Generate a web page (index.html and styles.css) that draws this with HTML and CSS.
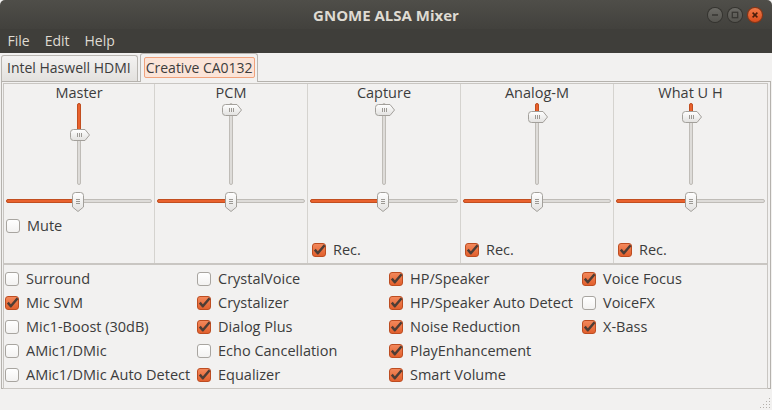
FILE: index.html
```html
<!DOCTYPE html>
<html lang="en">
  <head>
    <meta charset="UTF-8">
    <title>GNOME ALSA Mixer</title>
    <link rel="stylesheet" href="styles.css">
  </head>
  <body>
    <svg class="defs" width="0" height="0" aria-hidden="true">
      <defs>
        <linearGradient id="knobFill" x1="0" y1="0" x2="0" y2="1">
          <stop offset="0" stop-color="#ffffff"/>
          <stop offset="1" stop-color="#e2e1df"/>
        </linearGradient>
        <symbol id="vknob" viewBox="0 0 20 12">
          <path d="M3.5 0.5H15L19.5 6L15 11.5H3.5A3 3 0 0 1 0.5 8.5V3.5A3 3 0 0 1 3.5 0.5Z" fill="url(#knobFill)" stroke="#a3a09b"/>
          <path d="M7.5 4v4M9.5 4v4M11.5 4v4" stroke="#9c9994" stroke-width="1"/>
        </symbol>
        <symbol id="hknob" viewBox="0 0 12 20">
          <path d="M0.5 3.5A3 3 0 0 1 3.5 0.5H8.5A3 3 0 0 1 11.5 3.5V15L6 19.5L0.5 15Z" fill="url(#knobFill)" stroke="#a3a09b"/>
          <path d="M4 7.5h4M4 9.5h4M4 11.5h4" stroke="#9c9994" stroke-width="1"/>
        </symbol>
        <symbol id="tick" viewBox="0 0 14 14">
          <path d="M2.8 6.6L5.8 10.2L12.6 2.2" fill="none" stroke="#4e3d35" stroke-width="2.5" stroke-linejoin="round"/>
        </symbol>
      </defs>
    </svg>

    <div class="titlebar">
      <span></span>
      <span class="title">GNOME ALSA Mixer</span>
      <div class="wbtns">
        <span class="wbtn"><svg width="14" height="14" viewBox="0 0 14 14"><path d="M4 7h6" stroke="#393834" stroke-width="1.6"/></svg></span>
        <span class="wbtn"><svg width="14" height="14" viewBox="0 0 14 14"><rect x="4.3" y="4.3" width="5.4" height="5.4" fill="none" stroke="#393834" stroke-width="1.3"/></svg></span>
        <span class="wbtn wbtn-close"><svg width="14" height="14" viewBox="0 0 14 14"><path d="M4.6 4.6l4.8 4.8M9.4 4.6l-4.8 4.8" stroke="#4a1d0a" stroke-width="1.5"/></svg></span>
      </div>
    </div>

    <div class="menubar">
      <span class="menu-item">File</span>
      <span class="menu-item">Edit</span>
      <span class="menu-item">Help</span>
    </div>

    <div class="tabs">
      <div class="tab">Intel Haswell HDMI</div>
      <div class="tab tab-active"><span class="tab-focus">Creative CA0132</span></div>
    </div>

    <div class="notebook">
      <div class="strips">
        <div class="strip">
          <div class="strip-name">Master</div>
          <div class="vscale"><div class="vtrough"><div class="vfill" style="height:28px"></div><svg class="vthumb" style="top:25px" width="20" height="12"><use href="#vknob"/></svg></div></div>
          <div class="hscale"><div class="htrough"><div class="hfill" style="width:49%"></div><svg class="hthumb" style="left:calc(49% - 6px)" width="12" height="20"><use href="#hknob"/></svg></div></div>
          <div class="strip-checks">
            <label class="check"><span class="cb"></span>Mute</label>
            <span></span>
          </div>
        </div>
        <div class="strip">
          <div class="strip-name">PCM</div>
          <div class="vscale"><div class="vtrough"><svg class="vthumb" style="top:0px" width="20" height="12"><use href="#vknob"/></svg></div></div>
          <div class="hscale"><div class="htrough"><div class="hfill" style="width:50%"></div><svg class="hthumb" style="left:calc(50% - 6px)" width="12" height="20"><use href="#hknob"/></svg></div></div>
          <div class="strip-checks"></div>
        </div>
        <div class="strip">
          <div class="strip-name">Capture</div>
          <div class="vscale"><div class="vtrough"><svg class="vthumb" style="top:0px" width="20" height="12"><use href="#vknob"/></svg></div></div>
          <div class="hscale"><div class="htrough"><div class="hfill" style="width:49%"></div><svg class="hthumb" style="left:calc(49% - 6px)" width="12" height="20"><use href="#hknob"/></svg></div></div>
          <div class="strip-checks">
            <span></span>
            <label class="check"><span class="cb on"><svg width="14" height="14"><use href="#tick"/></svg></span>Rec.</label>
          </div>
        </div>
        <div class="strip">
          <div class="strip-name">Analog-M</div>
          <div class="vscale"><div class="vtrough"><div class="vfill" style="height:9px"></div><svg class="vthumb" style="top:7px" width="20" height="12"><use href="#vknob"/></svg></div></div>
          <div class="hscale"><div class="htrough"><div class="hfill" style="width:50%"></div><svg class="hthumb" style="left:calc(50% - 6px)" width="12" height="20"><use href="#hknob"/></svg></div></div>
          <div class="strip-checks">
            <span></span>
            <label class="check"><span class="cb on"><svg width="14" height="14"><use href="#tick"/></svg></span>Rec.</label>
          </div>
        </div>
        <div class="strip">
          <div class="strip-name">What U H</div>
          <div class="vscale"><div class="vtrough"><div class="vfill" style="height:9px"></div><svg class="vthumb" style="top:7px" width="20" height="12"><use href="#vknob"/></svg></div></div>
          <div class="hscale"><div class="htrough"><div class="hfill" style="width:50%"></div><svg class="hthumb" style="left:calc(50% - 6px)" width="12" height="20"><use href="#hknob"/></svg></div></div>
          <div class="strip-checks">
            <span></span>
            <label class="check"><span class="cb on"><svg width="14" height="14"><use href="#tick"/></svg></span>Rec.</label>
          </div>
        </div>
      </div>

      <div class="switches">
        <label class="check"><span class="cb"></span>Surround</label>
        <label class="check"><span class="cb"></span>CrystalVoice</label>
        <label class="check"><span class="cb on"><svg width="14" height="14"><use href="#tick"/></svg></span>HP/Speaker</label>
        <label class="check"><span class="cb on"><svg width="14" height="14"><use href="#tick"/></svg></span>Voice Focus</label>

        <label class="check"><span class="cb on"><svg width="14" height="14"><use href="#tick"/></svg></span>Mic SVM</label>
        <label class="check"><span class="cb on"><svg width="14" height="14"><use href="#tick"/></svg></span>Crystalizer</label>
        <label class="check"><span class="cb on"><svg width="14" height="14"><use href="#tick"/></svg></span>HP/Speaker Auto Detect</label>
        <label class="check"><span class="cb"></span>VoiceFX</label>

        <label class="check"><span class="cb"></span>Mic1-Boost (30dB)</label>
        <label class="check"><span class="cb on"><svg width="14" height="14"><use href="#tick"/></svg></span>Dialog Plus</label>
        <label class="check"><span class="cb on"><svg width="14" height="14"><use href="#tick"/></svg></span>Noise Reduction</label>
        <label class="check"><span class="cb on"><svg width="14" height="14"><use href="#tick"/></svg></span>X-Bass</label>

        <label class="check"><span class="cb"></span>AMic1/DMic</label>
        <label class="check"><span class="cb"></span>Echo Cancellation</label>
        <label class="check"><span class="cb on"><svg width="14" height="14"><use href="#tick"/></svg></span>PlayEnhancement</label>
        <span></span>

        <label class="check"><span class="cb"></span>AMic1/DMic Auto Detect</label>
        <label class="check"><span class="cb on"><svg width="14" height="14"><use href="#tick"/></svg></span>Equalizer</label>
        <label class="check"><span class="cb on"><svg width="14" height="14"><use href="#tick"/></svg></span>Smart Volume</label>
        <span></span>
      </div>
    </div>

    <div class="statusbar">
      <svg class="grip" width="11" height="11" viewBox="0 0 11 11">
        <g fill="#b3b0ab">
          <rect x="9" y="0" width="1" height="1"/>
          <rect x="6" y="3" width="1" height="1"/><rect x="9" y="3" width="1" height="1"/>
          <rect x="3" y="6" width="1" height="1"/><rect x="6" y="6" width="1" height="1"/><rect x="9" y="6" width="1" height="1"/>
          <rect x="0" y="9" width="1" height="1"/><rect x="3" y="9" width="1" height="1"/><rect x="6" y="9" width="1" height="1"/><rect x="9" y="9" width="1" height="1"/>
        </g>
      </svg>
    </div>
  </body>
</html>
```

FILE: styles.css
```css
html { background: #f2f1f0; }
body { margin: 0; width: 772px; height: 410px; overflow: hidden; background: #f2f1f0;
  font-family: "Open Sans", "DejaVu Sans", sans-serif; font-size: 14.5px; color: #3c3c3c; }
.defs { position: absolute; width: 0; height: 0; }

/* window chrome */
.titlebar { display: grid; grid-template-columns: 1fr auto 1fr; align-items: center; height: 29px;
  background: linear-gradient(#4f4e49, #42413d); border-radius: 5px 5px 0 0; }
.title { color: #dfdbd2; font-weight: bold; font-size: 15px; }
.wbtns { justify-self: end; display: flex; gap: 6px; padding-right: 10px; }
.wbtn { display: block; width: 14px; height: 14px; border-radius: 50%; box-sizing: border-box;
  background: linear-gradient(#6b6a65, #55544f); box-shadow: 0 0 0 1px #34332f; }
.wbtn svg { display: block; }
.wbtn-close { background: linear-gradient(#f27a48, #dc4c1b); box-shadow: 0 0 0 1px #8f3311; }

.menubar { display: flex; align-items: center; height: 24px; background: #3f3e3a; }
.menu-item { padding: 0 7.5px; color: #dfdbd2; line-height: 20px; font-size: 14px; }

/* tabs */
.tabs { display: flex; align-items: flex-end; gap: 2px; height: 28px; padding-left: 1px; font-size: 14px; }
.tab { box-sizing: border-box; height: 26px; padding: 0 6px 0 5px; line-height: 23px;
  border: 1px solid #b9b6b1; border-bottom: none; border-radius: 3px 3px 0 0;
  background: linear-gradient(#f3f2f1, #e3e1de); }
.tab-active { position: relative; height: 29px; margin-bottom: -1px; padding: 3px 2px 0 3px;
  background: #f2f1f0; line-height: 19px; }
.tab-focus { display: block; padding: 0 1px; border: 1px solid #f0a27c; border-radius: 2px; background: #fbe4d8; }

.notebook { box-sizing: border-box; width: 770px; height: 308px; margin-left: 1px; padding: 1px 2px 0 1px;
  border: 1px solid #b5b2ad; }

/* mixer strips */
.strips { display: grid; grid-template-columns: 150px 153px 153px 153px 1fr; border: 1px solid #c9c6c2; }
.strip + .strip { border-left: 1px solid #d5d3cf; }
.strip-name { height: 18px; line-height: 17px; text-align: center; }
.vscale { height: 86px; }
.vtrough { position: relative; width: 4px; height: 82px; margin: 1px auto 0; box-sizing: border-box;
  background: #dedcd9; border: 1px solid #bfbcb7; border-radius: 2px; }
.vfill { margin: -1px; background: #e9622e; border: 1px solid #c24e1f; border-radius: 2px; }
.vthumb { position: absolute; left: -8px; display: block; }
.hscale { height: 24px; padding: 10px 2px 0; box-sizing: border-box; }
.htrough { position: relative; height: 4px; box-sizing: border-box;
  background: #dedcd9; border: 1px solid #bfbcb7; border-radius: 2px; }
.hfill { height: 4px; margin: -1px; box-sizing: border-box; background: #e9622e; border: 1px solid #c24e1f; border-radius: 2px; }
.hthumb { position: absolute; top: -8px; display: block; }
.strip-checks { display: grid; grid-template-rows: 24px 24px; height: 50px; box-sizing: border-box;
  padding: 1px 0 1px 2px; }
.strip:nth-child(n+3) .strip-checks { padding-left: 4px; }

/* switches */
.switches { display: grid; grid-template-columns: 192px 192px 193px 180px; grid-auto-rows: 24px;
  padding: 2px 0 0 1px; border: 1px solid #c9c6c2; height: 125px; box-sizing: border-box; }
.check { display: flex; align-items: center; gap: 7px; white-space: nowrap; line-height: 18px; }
.cb { display: block; flex: none; width: 14px; height: 14px; box-sizing: border-box;
  border: 1px solid #a8a5a0; border-radius: 3px; background: linear-gradient(#ffffff, #f3f2f1); }
.cb svg { display: block; margin: -1px; }
.cb.on { background: linear-gradient(#f3885b, #e2602d); border-color: #bd4d21; }

.statusbar { display: flex; justify-content: flex-end; align-items: flex-end; height: 21px; }
.grip { display: block; margin: 0 1px 1px 0; }
```
